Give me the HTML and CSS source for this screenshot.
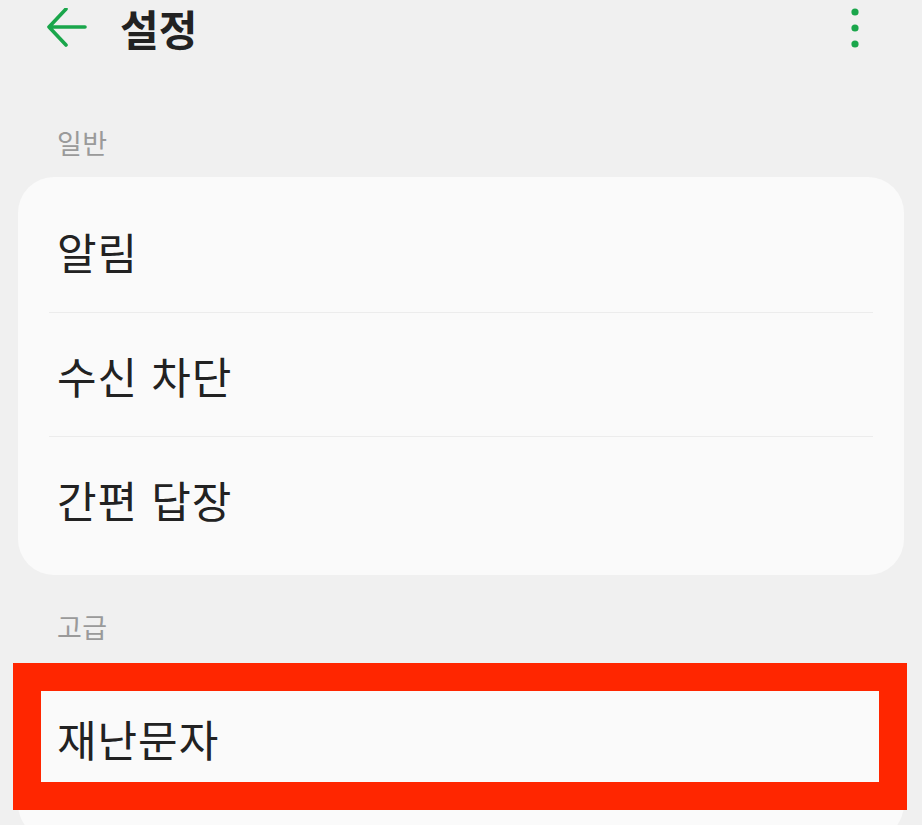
FILE: index.html
```html
<!DOCTYPE html>
<html lang="ko">
<head>
<meta charset="utf-8">
<title>설정</title>
<link rel="stylesheet" href="styles.css">
</head>
<body>
<div class="screen">
  <header class="topbar">
    <svg class="back" width="40" height="40" viewBox="0 0 40 40">
      <path d="M2 19 H38 M19 1 L2 19 L19 37" fill="none" stroke="#1aa64b" stroke-width="3.6" stroke-linecap="round" stroke-linejoin="round"/>
    </svg>
    <h1 class="title">설정</h1>
    <svg class="more" width="10" height="42" viewBox="0 0 10 42">
      <circle cx="5" cy="5" r="3.6" fill="#1aa64b"/>
      <circle cx="5" cy="21" r="3.6" fill="#1aa64b"/>
      <circle cx="5" cy="37" r="3.6" fill="#1aa64b"/>
    </svg>
  </header>

  <div class="section-label first">일반</div>
  <div class="card">
    <div class="row">알림</div>
    <div class="row">수신 차단</div>
    <div class="row last">간편 답장</div>
  </div>

  <div class="section-label second">고급</div>
  <div class="card card-adv">
    <div class="row">재난문자</div>
    <div class="highlight"></div>
  </div>
</div>
</body>
</html>
```

FILE: styles.css
```css
html, body {
  margin: 0;
  padding: 0;
}
body {
  background: #f0f0f0;
  font-family: "Noto Sans CJK KR", "Noto Sans", sans-serif;
  color: #222;
}
.screen {
  width: 922px;
  height: 825px;
  overflow: hidden;
}
.topbar {
  height: 56px;
  display: flex;
  align-items: center;
  padding-left: 47px;
  padding-right: 62px;
}
.back {
  display: block;
}
.title {
  margin: 0 0 0 33px;
  font-size: 42px;
  font-weight: 700;
  line-height: 1.2;
  color: #222;
  flex: 1;
}
.more {
  display: block;
}
.section-label {
  font-size: 27px;
  line-height: 40px;
  color: #9a9a9a;
  padding-left: 57px;
  letter-spacing: 0.5px;
}
.section-label.first {
  margin-top: 67px;
  margin-bottom: 14px;
}
.section-label.second {
  margin-top: 32px;
  margin-bottom: 17px;
}
.card {
  margin: 0 18px;
  background: #fafafa;
  border-radius: 36px;
  padding: 12px 31px 14px;
}
.card-adv {
  position: relative;
  padding-bottom: 40px;
}
.row {
  height: 124px;
  display: flex;
  align-items: center;
  padding-left: 8px;
  font-size: 43px;
  letter-spacing: 1px;
  color: #222;
  border-bottom: 1px solid #ececec;
  box-sizing: border-box;
}
.row.last {
  border-bottom: none;
}
.card-adv .row {
  border-bottom: none;
}
.highlight {
  position: absolute;
  left: -5px;
  top: -1px;
  width: 894px;
  height: 147px;
  border: 28px solid #ff2600;
  box-sizing: border-box;
}
```
